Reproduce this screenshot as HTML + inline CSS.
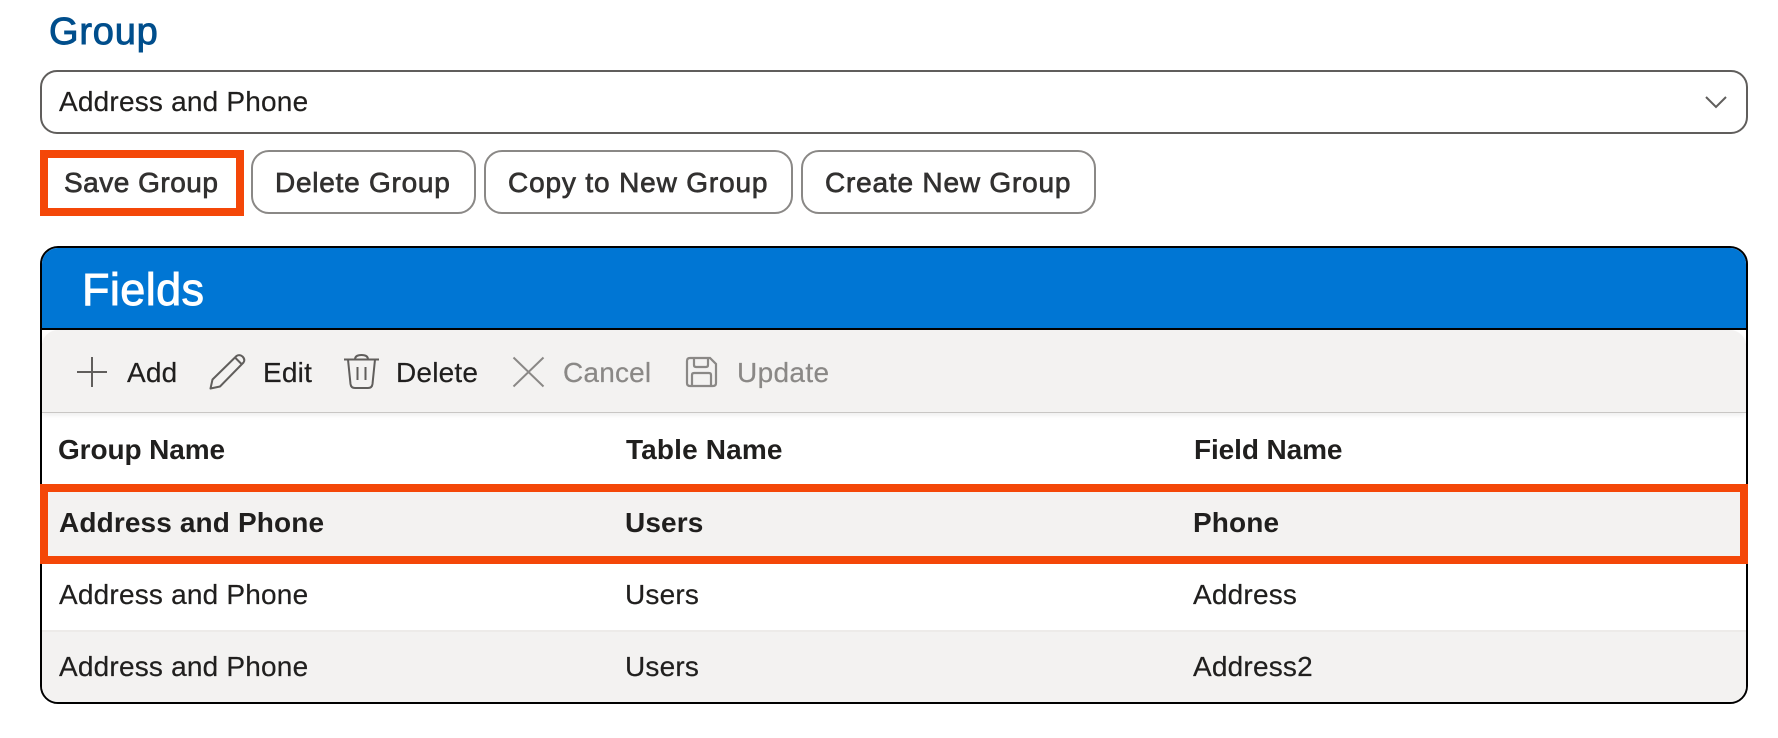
<!DOCTYPE html>
<html>
<head>
<meta charset="utf-8">
<style>
html,body{margin:0;padding:0;background:#fff;}
body{width:1778px;height:738px;position:relative;overflow:hidden;font-family:"Liberation Sans",sans-serif;}
.b{position:absolute;box-sizing:border-box;}
.t{position:absolute;line-height:1;font-size:28px;white-space:nowrap;color:#201f1e;letter-spacing:.2px;-webkit-text-stroke:.2px currentColor;}
.btn{color:#323130;-webkit-text-stroke:.7px #323130;top:168.500px;}
.tb{top:358.5px;}
.dis{color:#8a8886;}
.h{font-weight:bold;top:435.5px;-webkit-text-stroke:0;}
.sel{font-weight:bold;top:508.5px;-webkit-text-stroke:0;}
.r2{top:580.5px;}
.r3{top:652.5px;}
svg{position:absolute;overflow:visible;fill:none;}
</style>
</head>
<body>
<div class="t" style="left:49px;top:13px;font-size:38px;color:#004e8c;letter-spacing:.8px;-webkit-text-stroke:.9px #004e8c;">Group</div>

<div class="b" style="left:40px;top:70px;width:1708px;height:64px;border:2px solid #605e5c;border-radius:17px;background:#fff;"></div>
<div class="t" style="left:59px;top:88px;">Address and Phone</div>
<svg style="left:1705px;top:96px;" width="22" height="12" viewBox="0 0 22 12"><path d="M1 1 L11 11 L21 1" stroke="#605e5c" stroke-width="2"/></svg>

<div class="b" style="left:40px;top:150px;width:204px;height:66px;border:8px solid #f44708;background:#fff;"></div>
<div class="t btn" style="left:64px;letter-spacing:.5px;">Save Group</div>

<div class="b" style="left:251px;top:150px;width:225px;height:64px;border:2px solid #8a8886;border-radius:18px;"></div>
<div class="t btn" style="left:275px;letter-spacing:.75px;">Delete Group</div>

<div class="b" style="left:484px;top:150px;width:309px;height:64px;border:2px solid #8a8886;border-radius:18px;"></div>
<div class="t btn" style="left:508px;letter-spacing:.85px;">Copy to New Group</div>

<div class="b" style="left:801px;top:150px;width:295px;height:64px;border:2px solid #8a8886;border-radius:18px;"></div>
<div class="t btn" style="left:825px;letter-spacing:.8px;">Create New Group</div>

<!-- panel -->
<div class="b" style="left:40px;top:246px;width:1708px;height:458px;border:2px solid #000;border-radius:18px;background:#fff;overflow:hidden;">
  <div class="b" style="left:0;top:0;width:1704px;height:82px;background:#0076d4;border-bottom:2px solid #000;"></div>
  <div class="b" style="left:0;top:82px;width:1704px;height:82px;background:#f3f2f1;border-radius:16px 16px 0 0;box-shadow:0 1px 0 #c8c6c4,0 3px 6px rgba(0,0,0,.08);"></div>
  <div class="b" style="left:0;top:316px;width:1704px;height:68px;background:#fff;"></div>
  <div class="b" style="left:0;top:382px;width:1704px;height:2px;background:#edebe9;"></div>
  <div class="b" style="left:0;top:384px;width:1704px;height:72px;background:#f3f2f1;"></div>
</div>
<div class="t" style="left:82px;top:267px;font-size:45px;color:#fff;letter-spacing:.4px;-webkit-text-stroke:.9px #fff;">Fields</div>

<!-- toolbar -->
<svg style="left:77px;top:357px;" width="30" height="30" viewBox="0 0 30 30"><path d="M0 15H30M15 0V30" stroke="#605e5c" stroke-width="2"/></svg>
<div class="t tb" style="left:127px;">Add</div>
<svg style="left:210px;top:354px;" width="35" height="35" viewBox="0 0 35 35"><path d="M0.500 34.500 L2.500 25.500 L26.500 2 Q29.500 0 32.500 2.500 Q35.500 5.500 33.500 8.500 L10 32.500 Z M25 3.500 L32 10.500" stroke="#605e5c" stroke-width="2" stroke-linejoin="round"/></svg>
<div class="t tb" style="left:263px;">Edit</div>
<svg style="left:344px;top:354px;" width="35" height="35" viewBox="0 0 35 35"><path d="M0 5.500H35M11 5.500 Q11 1 17.500 1 Q24 1 24 5.500M4 5.500 L6.500 30 Q7 34 11 34 H24 Q28 34 28.500 30 L31 5.500M13.500 13V26M21.500 13V26" stroke="#605e5c" stroke-width="2"/></svg>
<div class="t tb" style="left:396px;">Delete</div>
<svg style="left:513px;top:357px;" width="31" height="30" viewBox="0 0 31 30"><path d="M0.500 0.500L30.500 29.500M30.500 0.500L0.500 29.500" stroke="#8a8886" stroke-width="2"/></svg>
<div class="t tb dis" style="left:563px;">Cancel</div>
<svg style="left:686px;top:357px;" width="31" height="30" viewBox="0 0 31 30"><path d="M4 1H24L30 7V26Q30 29 27 29H4Q1 29 1 26V4Q1 1 4 1ZM8 1V8Q8 10 10 10H20Q22 10 22 8V1M6 29V18Q6 16 8 16H23Q25 16 25 18V29" stroke="#8a8886" stroke-width="2.200"/></svg>
<div class="t tb dis" style="left:737px;letter-spacing:.35px;">Update</div>

<!-- header -->
<div class="t h" style="left:58px;letter-spacing:-.1px;">Group Name</div>
<div class="t h" style="left:626px;letter-spacing:.15px;">Table Name</div>
<div class="t h" style="left:1194px;letter-spacing:-.1px;">Field Name</div>

<!-- selected row -->
<div class="b" style="left:40px;top:484px;width:1708px;height:80px;border:8px solid #f44708;background:#f3f2f1;"></div>
<div class="t sel" style="left:59px;letter-spacing:.13px;">Address and Phone</div>
<div class="t sel" style="left:625px;letter-spacing:.13px;">Users</div>
<div class="t sel" style="left:1193px;letter-spacing:.13px;">Phone</div>

<div class="t r2" style="left:59px;">Address and Phone</div>
<div class="t r2" style="left:625px;">Users</div>
<div class="t r2" style="left:1193px;">Address</div>

<div class="t r3" style="left:59px;">Address and Phone</div>
<div class="t r3" style="left:625px;">Users</div>
<div class="t r3" style="left:1193px;">Address2</div>
</body>
</html>
